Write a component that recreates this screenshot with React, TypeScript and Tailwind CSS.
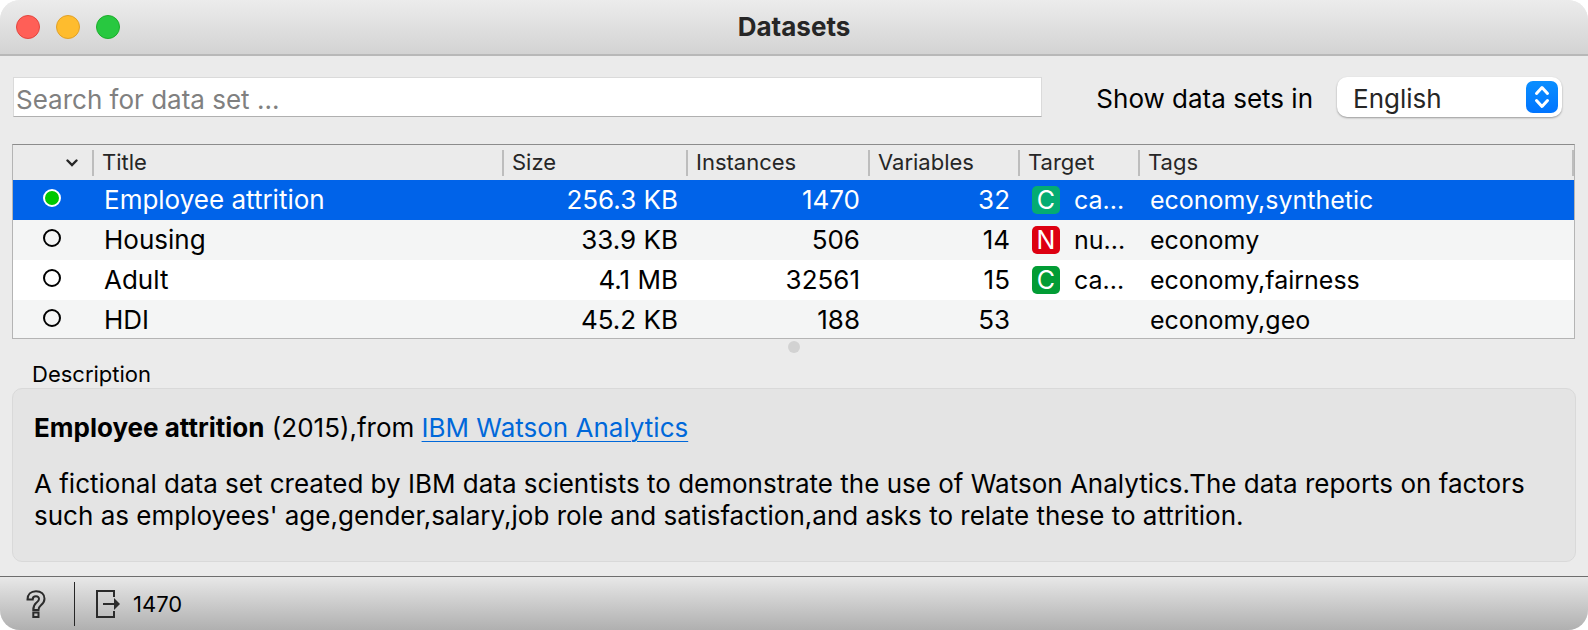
import { ReactNode } from "react";
import clsx from "clsx";

type Kind = "C" | "N";

type Dataset = {
  title: string;
  size: string;
  instances: number;
  variables: number;
  target?: { kind: Kind; label: string };
  tags: string;
};

const datasets: Dataset[] = [
  {
    title: "Employee attrition",
    size: "256.3 KB",
    instances: 1470,
    variables: 32,
    target: { kind: "C", label: "ca..." },
    tags: "economy,synthetic",
  },
  {
    title: "Housing",
    size: "33.9 KB",
    instances: 506,
    variables: 14,
    target: { kind: "N", label: "nu..." },
    tags: "economy",
  },
  {
    title: "Adult",
    size: "4.1 MB",
    instances: 32561,
    variables: 15,
    target: { kind: "C", label: "ca..." },
    tags: "economy,fairness",
  },
  {
    title: "HDI",
    size: "45.2 KB",
    instances: 188,
    variables: 53,
    tags: "economy,geo",
  },
];

const TitleBar = () => {
  return (
    <header className="grid h-14 grid-cols-[1fr_auto_1fr] items-center border-b-2 border-[#b8b8b8] bg-gradient-to-b from-[#ececec] to-[#d3d3d3] px-4">
      <div className="flex gap-4">
        <button aria-label="Close" className="size-6 rounded-full border border-[#e2463f] bg-[#ff5f57]" />
        <button aria-label="Minimize" className="size-6 rounded-full border border-[#e0a028] bg-[#febc2e]" />
        <button aria-label="Zoom" className="size-6 rounded-full border border-[#1dad2b] bg-[#28c840]" />
      </div>
      <h1 className="text-[26px] leading-8 font-bold text-[#262626]">Datasets</h1>
    </header>
  );
};

const Toolbar = () => {
  return (
    <div className="flex items-center pt-[21px] pr-[26px] pl-[13px]">
      <input
        type="text"
        aria-label="Search data sets"
        placeholder="Search for data set ..."
        className="h-10 min-w-0 flex-1 border border-[#dadada] border-b-[#b0b0b0] bg-white px-[2px] pt-1 text-[26px] text-black outline-none placeholder:text-[#808080]"
      />
      <label htmlFor="language" className="pt-1 pr-6 pl-[54px] text-[26px] leading-8 text-black">
        Show data sets in
      </label>
      <div className="relative">
        <select
          id="language"
          className="h-10 w-[225px] appearance-none rounded-[10px] bg-white pt-0.5 pl-4 text-[26px] text-[#262626] shadow-[0_1px_2px_rgba(0,0,0,0.35)] outline-none"
        >
          <option>English</option>
          <option>Slovenian</option>
        </select>
        <svg viewBox="0 0 32 32" className="pointer-events-none absolute top-1 right-1 size-8">
          <defs>
            <linearGradient id="stepper" x1="0" y1="0" x2="0" y2="1">
              <stop offset="0" stopColor="#0a8fff" />
              <stop offset="1" stopColor="#0074ff" />
            </linearGradient>
          </defs>
          <rect width="32" height="32" rx="7" fill="url(#stepper)" />
          <path
            d="M10.500 12.500 16 6.500l5.500 6M10.500 19.500l5.500 6 5.500-6"
            fill="none"
            stroke="#fff"
            strokeWidth="3"
            strokeLinecap="round"
            strokeLinejoin="round"
          />
        </svg>
      </div>
    </div>
  );
};

const HeadCell = ({ children }: { children: ReactNode }) => {
  return (
    <th scope="col" className="p-0 font-normal">
      <div className="h-[26px] border-r-2 border-[#bdbdbd] pl-2 text-left leading-6">{children}</div>
    </th>
  );
};

const TargetBadge = ({ kind, selected }: { kind: Kind; selected: boolean }) => {
  return (
    <span
      className={clsx(
        "flex size-7 shrink-0 items-center justify-center rounded-[5px] text-[25px] leading-7 text-white",
        kind === "N" && "bg-[#dd0011]",
        kind === "C" && (selected ? "bg-[#04ac72]" : "bg-[#029c35]")
      )}
    >
      {kind}
    </span>
  );
};

const DatasetTable = () => {
  return (
    <div className="mr-[13px] ml-3 mt-[27px] h-[195px] overflow-hidden border border-[#b4b4b4] border-t-[#8c8c8c]">
      <table className="w-full table-fixed border-collapse">
        <colgroup>
          <col className="w-[81px]" />
          <col className="w-[410px]" />
          <col className="w-[184px]" />
          <col className="w-[182px]" />
          <col className="w-[150px]" />
          <col className="w-[120px]" />
          <col />
        </colgroup>
        <thead>
          <tr className="h-[35px] text-[22px] text-[#262626]">
            <HeadCell>
              <span className="flex h-full items-center justify-end pr-[14px]">
                <svg viewBox="0 0 12 8" className="h-2 w-3" role="img" aria-label="Sort">
                  <path d="M1.500 1.500 6 6l4.500-4.500" fill="none" stroke="#262626" strokeWidth="2.4" strokeLinecap="round" />
                </svg>
              </span>
            </HeadCell>
            <HeadCell>Title</HeadCell>
            <HeadCell>Size</HeadCell>
            <HeadCell>Instances</HeadCell>
            <HeadCell>Variables</HeadCell>
            <HeadCell>Target</HeadCell>
            <HeadCell>Tags</HeadCell>
          </tr>
        </thead>
        <tbody>
          {datasets.map((d, i) => {
            const selected = i === 0;
            return (
              <tr
                key={d.title}
                aria-selected={selected}
                className={clsx(
                  "h-10 text-[26px] leading-10",
                  selected ? "bg-[#0063e9] text-white" : "text-black",
                  !selected && (i % 2 ? "bg-[#f4f5f5]" : "bg-white")
                )}
              >
                <td className="p-0">
                  <div className="flex h-10 items-center pb-1 pl-[30px]">
                    <span className={clsx("size-[18px] rounded-full border-2 border-current", selected && "bg-[#00c800]")} />
                  </div>
                </td>
                <td className="p-0 pl-[10px]">{d.title}</td>
                <td className="p-0 pr-[10px] text-right">{d.size}</td>
                <td className="p-0 pr-[10px] text-right">{d.instances}</td>
                <td className="p-0 pr-[10px] text-right">{d.variables}</td>
                <td className="p-0 text-[25px]">
                  {d.target && (
                    <div className="flex items-center gap-[14px] pl-3">
                      <TargetBadge kind={d.target.kind} selected={selected} />
                      {d.target.label}
                    </div>
                  )}
                </td>
                <td className="p-0 pl-[10px] text-[25px]">{d.tags}</td>
              </tr>
            );
          })}
        </tbody>
      </table>
    </div>
  );
};

const Description = () => {
  return (
    <section className="mx-3">
      <h2 className="pl-5 text-[22px] leading-7 text-black">Description</h2>
      <div className="rounded-[10px] border border-[#d9d9d9] bg-[#e4e4e4] px-[21px] pt-[23px] pb-[29px] text-[26px] leading-8 text-black">
        <p>
          <b className="font-bold">Employee attrition</b> (2015),from{" "}
          <a href="#" className="text-[#0068da] underline decoration-1 underline-offset-4">
            IBM Watson Analytics
          </a>
        </p>
        <p className="mt-6">
          A fictional data set created by IBM data scientists to demonstrate the use of Watson Analytics.The data
          reports on factors such as employees' age,gender,salary,job role and satisfaction,and asks to relate these to
          attrition.
        </p>
      </div>
    </section>
  );
};

const StatusBar = () => {
  return (
    <footer className="mt-auto flex h-[54px] items-center border-t border-[#6e6e6e] bg-gradient-to-b from-[#e8e8e8] to-[#b0b0b0]">
      <button aria-label="Help" className="ml-[26px]">
        <svg viewBox="0 0 20 28" className="h-7 w-5" fill="none" stroke="#2b2b2b" strokeWidth="2">
          <path d="M1.500 9.500C1.500 4.500 4.800 1.200 10 1.200s8.500 3 8.500 7.600c0 3.600-2 5.300-3.800 6.800-1.600 1.300-2.200 1.900-2.200 4.400H7.300c0-4.500 1.300-5.800 3-7.200 1.500-1.200 2.700-2 2.700-3.800 0-1.600-1.200-2.700-3-2.700-2.200 0-3.300 1.200-3.300 3.200z" />
          <path d="M7.300 22.500h5.200v4.500H7.300z" />
        </svg>
      </button>
      <div className="ml-7 h-11 w-px bg-[#262626]" />
      <button className="ml-[21px] flex items-center gap-3 text-[22px] leading-7 text-black">
        <svg viewBox="0 0 25 28" className="h-7 w-[25px]" aria-hidden="true">
          <path d="M18 7V1H1v26h17v-6" fill="none" stroke="#2b2b2b" strokeWidth="2" />
          <path d="M7 14h12" stroke="#2b2b2b" strokeWidth="2" />
          <path d="M18 8l6 6-6 6z" fill="#2b2b2b" />
        </svg>
        1470
      </button>
    </footer>
  );
};

export default function App() {
  return (
    <div className="bg-white font-['Inter',sans-serif]">
      <main className="flex min-h-screen flex-col overflow-hidden rounded-[20px] bg-[#ebebeb]">
        <TitleBar />
        <Toolbar />
        <DatasetTable />
        <div className="mx-auto mt-0.5 mb-[7px] size-3 rounded-full bg-[#d2d2d2]" />
        <Description />
        <StatusBar />
      </main>
    </div>
  );
}
